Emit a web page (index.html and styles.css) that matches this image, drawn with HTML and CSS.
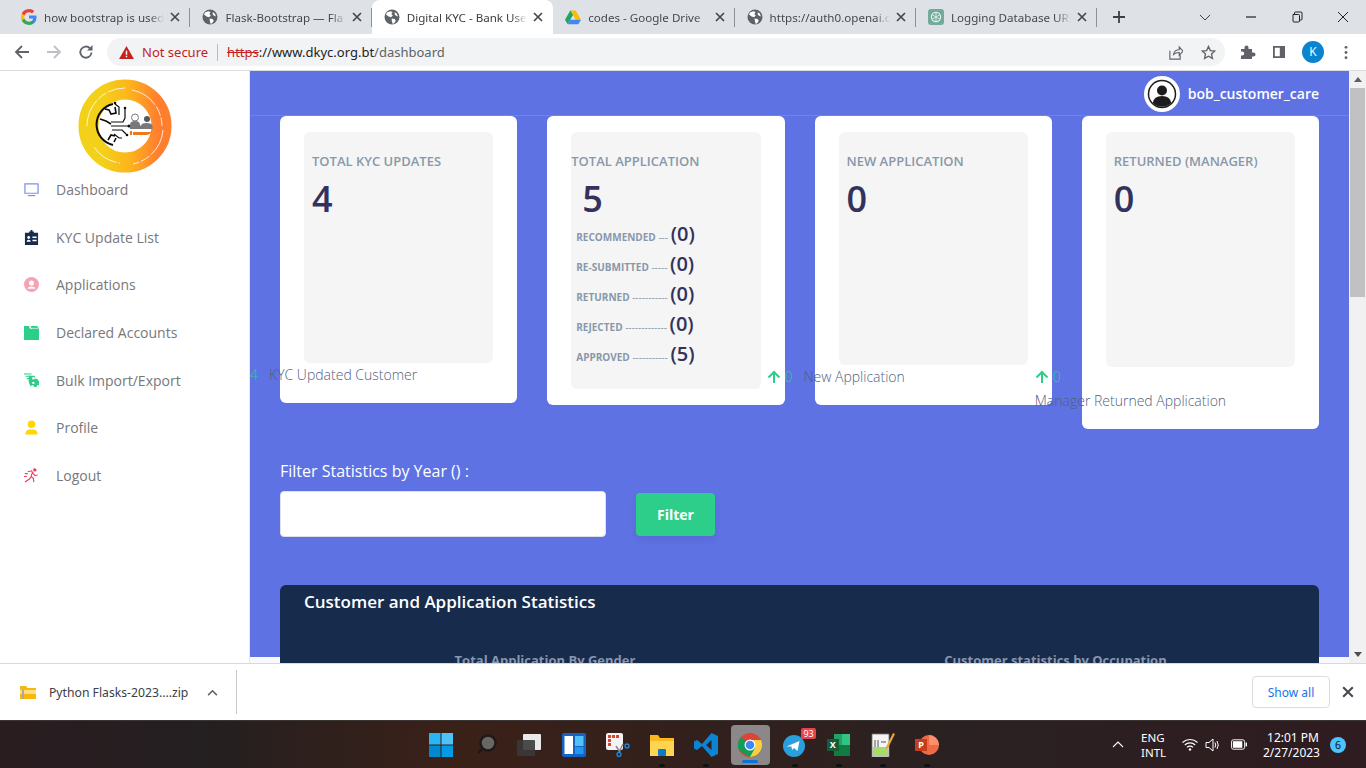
FILE: index.html
```html
<!DOCTYPE html>
<html>
<head>
  <meta charset="UTF-8">
  <title>Digital KYC - Bank User</title>
  <link rel="stylesheet" href="styles.css">
</head>
<body>
  <svg class="defs" width="0" height="0">
    <symbol id="globe" viewBox="0 0 16 16">
      <circle cx="8" cy="8" r="7.5" fill="#5f6368"/>
      <path d="M3 3.6 6.2 2.2 8.6 3 7.4 5 8.8 6.4 7 8.2 4.6 7.4 2 5.6ZM7.6 9.4l3 .6 1.2 1.8-1.8 2.6-1.4.4-.8-3ZM10.6 3.2l2.2 1.2 1.2 3-2-.6-1.2-1.4Z" fill="#fff"/>
    </symbol>
    <symbol id="x-mark" viewBox="0 0 10 10">
      <path d="M1 1 9 9M9 1 1 9" stroke="#45494e" stroke-width="1.7" fill="none"/>
    </symbol>
  </svg>

  <div class="tabstrip">
    <div class="tab tab-sep">
      <svg class="favicon" viewBox="0 0 16 16">
        <path d="M15.5 8.2c0-.6-.1-1.1-.2-1.6H8v3h4.2a3.6 3.6 0 0 1-1.6 2.4v2h2.6c1.5-1.4 2.3-3.4 2.3-5.8Z" fill="#4285f4"/>
        <path d="M8 16c2.2 0 4-.7 5.2-2l-2.6-2c-.7.5-1.6.8-2.6.8-2.1 0-3.900-1.4-4.5-3.3H.8v2.100A8 8 0 0 0 8 16Z" fill="#34a853"/>
        <path d="M3.5 9.500a4.800 4.800 0 0 1 0-3V4.400H.8a8 8 0 0 0 0 7.200Z" fill="#fbbc05"/>
        <path d="M8 3.200c1.200 0 2.200.4 3 1.200l2.300-2.300A8 8 0 0 0 .8 4.400l2.700 2.100C4.100 4.600 5.900 3.200 8 3.200Z" fill="#ea4335"/>
      </svg>
      <span class="tab-title">how bootstrap is used</span>
      <svg class="tab-close"><use href="#x-mark"/></svg>
    </div>
    <div class="tab tab-sep">
      <svg class="favicon"><use href="#globe"/></svg>
      <span class="tab-title">Flask-Bootstrap — Fla</span>
      <svg class="tab-close"><use href="#x-mark"/></svg>
    </div>
    <div class="tab tab-active">
      <svg class="favicon"><use href="#globe"/></svg>
      <span class="tab-title">Digital KYC - Bank Use</span>
      <svg class="tab-close"><use href="#x-mark"/></svg>
    </div>
    <div class="tab tab-sep">
      <svg class="favicon" viewBox="0 0 16 16">
        <path d="M5.3 1.500h5.400L16 10.700h-5.300Z" fill="#fbbc04"/>
        <path d="M5.3 1.500 0 10.700l2.700 4.600L8 6.100Z" fill="#1fa463"/>
        <path d="M2.7 15.300h10.600l2.700-4.600H5.300Z" fill="#4285f4"/>
      </svg>
      <span class="tab-title">codes - Google Drive</span>
      <svg class="tab-close"><use href="#x-mark"/></svg>
    </div>
    <div class="tab tab-sep">
      <svg class="favicon"><use href="#globe"/></svg>
      <span class="tab-title">https://auth0.openai.c</span>
      <svg class="tab-close"><use href="#x-mark"/></svg>
    </div>
    <div class="tab tab-sep">
      <svg class="favicon" viewBox="0 0 16 16">
        <rect width="16" height="16" rx="3" fill="#74aa9c"/>
        <circle cx="8" cy="8" r="4.600" fill="none" stroke="#e8f3f0" stroke-width="1.100"/>
        <path d="M8 3.400v9.200M4 5.700l8 4.600M12 5.700l-8 4.600" stroke="#e8f3f0" stroke-width=".8"/>
      </svg>
      <span class="tab-title">Logging Database URI</span>
      <svg class="tab-close"><use href="#x-mark"/></svg>
    </div>
    <svg class="new-tab" viewBox="0 0 12 12"><path d="M6 0v12M0 6h12" stroke="#3c4043" stroke-width="1.8"/></svg>
    <div class="win-controls">
      <svg viewBox="0 0 12 12"><path d="M1 4l5 5 5-5" fill="none" stroke="#3c4043"/></svg>
      <svg viewBox="0 0 12 12"><path d="M1 6h10" stroke="#222" stroke-width="1.2"/></svg>
      <svg viewBox="0 0 12 12"><path d="M3.5 3.500V2a1 1 0 0 1 1-1h5.500a1 1 0 0 1 1 1v6a1 1 0 0 1-1 1H8.500M2 3.500h5.500a1 1 0 0 1 1 1V10a1 1 0 0 1-1 1H3a1 1 0 0 1-1-1Z" fill="none" stroke="#222"/></svg>
      <svg viewBox="0 0 12 12"><path d="M1 1l10 10M11 1 1 11" stroke="#222"/></svg>
    </div>
  </div>

  <div class="toolbar">
    <svg class="tool-icon" viewBox="0 0 16 16"><path d="M15 8H2M8 2 2 8l6 6" fill="none" stroke="#5f6368" stroke-width="1.8"/></svg>
    <svg class="tool-icon" viewBox="0 0 16 16"><path d="M1 8h13M8 2l6 6-6 6" fill="none" stroke="#bdc1c6" stroke-width="1.8"/></svg>
    <svg class="tool-icon" viewBox="0 0 16 16"><path d="M13.5 8.500A5.600 5.600 0 1 1 12 4.300" fill="none" stroke="#5f6368" stroke-width="1.8"/><path d="M14.5 1v5.500H9Z" fill="#5f6368"/></svg>
    <div class="omnibox">
      <svg class="warn" viewBox="0 0 16 14"><path d="M8 0l8 14H0Z" fill="#c5221f"/><path d="M7.2 5h1.600v4.500H7.200ZM7.200 10.500h1.600V12H7.200Z" fill="#fff"/></svg>
      <span class="not-secure">Not secure</span>
      <span class="url"><s>https</s><span class="url-dark">://www.dkyc.org.bt</span>/dashboard</span>
      <svg class="omni-icon share" viewBox="0 0 16 16"><path d="M2 6v9h11v-4M6 10c.5-3.500 3-5 6-5V2l4 4.500L12 11V8c-2.500 0-4.500.5-6 2Z" fill="none" stroke="#5f6368" stroke-width="1.2"/></svg>
      <svg class="omni-icon" viewBox="0 0 16 16"><path d="M8 1.500l2 4.400 4.700.5-3.500 3.200 1 4.700L8 11.900l-4.200 2.400 1-4.700L1.300 6.400 6 5.900Z" fill="none" stroke="#5f6368" stroke-width="1.4"/></svg>
    </div>
    <svg class="tool-icon tool-ext" viewBox="0 0 16 16"><path d="M1 5h3.500V3.500a2 2 0 0 1 4 0V5H12v3.500h1.500a2 2 0 0 1 0 4H12V15H1v-3.500h1.200a2 2 0 0 0 0-4H1Z" fill="#5f6368"/></svg>
    <svg class="tool-icon" viewBox="0 0 16 16"><path d="M2 2h12v12H2ZM3.800 3.800v8.400h5V3.800Z" fill="#5f6368" fill-rule="evenodd"/></svg>
    <div class="account">K</div>
    <svg class="tool-menu" viewBox="0 0 4 16"><circle cx="2" cy="2.500" r="1.500" fill="#5f6368"/><circle cx="2" cy="8" r="1.500" fill="#5f6368"/><circle cx="2" cy="13.500" r="1.500" fill="#5f6368"/></svg>
  </div>

  <div class="page">
    <aside class="sidebar">
      <svg class="logo" viewBox="0 0 94 94">
        <defs>
          <linearGradient id="ring" x1="0" x2="1" y1="0" y2="0">
            <stop offset=".2" stop-color="#f3d019"/>
            <stop offset=".55" stop-color="#fdb51c"/>
            <stop offset=".95" stop-color="#ff7f2e"/>
          </linearGradient>
        </defs>
        <circle cx="47" cy="47" r="36.500" fill="none" stroke="url(#ring)" stroke-width="20"/>
        <path d="M9 47A38 38 0 0 1 47 9M54 11a37 37 0 0 1 30 36M85 51a38 38 0 0 1-30 34M16 68a37 37 0 0 0 26 16" fill="none" stroke="#fff" stroke-width=".8" stroke-dasharray="28 2 10 2"/>
        <path d="M35 25A21 21 0 0 0 35 66" fill="none" stroke="#0c0c0e" stroke-width="2"/>
        <path d="M27 30l4 1 2 4 5-1-1-6M22 40l6 2 5 3M30 61l3-5 4 1M36 63l2-4" fill="none" stroke="#0c0c0e" stroke-width="1.6"/>
        <path d="M33 43h12l2-4v-9M33 47h17M34 51h10l4 4M37 25l4 3v8M36 55l5 4h3" fill="none" stroke="#0c0c0e" stroke-width="1.2"/>
        <circle cx="47" cy="29" r="1.300" fill="#0c0c0e"/><circle cx="51" cy="47" r="1.500" fill="#0c0c0e"/><circle cx="49" cy="56" r="1.300" fill="#0c0c0e"/><circle cx="37" cy="24" r="1.300" fill="#0c0c0e"/>
        <circle cx="57" cy="38.500" r="3.500" fill="#fff" stroke="#77797c"/>
        <circle cx="69" cy="40" r="3" fill="#56585b"/>
        <path d="M52 50v-4q0-4 5-4t5 4l1 1q0-3 5.500-3t6 3v3Z" fill="#77797c"/>
        <path d="M52 52h2v4h-2ZM55 53h16q2 0 3-1-2 4-6 4H55Z" fill="#ee7a1d"/>
      </svg>
      <nav class="nav">
        <a class="nav-item">
          <svg viewBox="0 0 16 16"><path d="M1 2h14v10H1Z" fill="none" stroke="#7f8fef" stroke-width="1.3"/><path d="M4 14.500h8" stroke="#7f8fef" stroke-width="1.3"/></svg>
          Dashboard
        </a>
        <a class="nav-item">
          <svg viewBox="0 0 16 16"><path d="M1 3h4.500V1.500h1.500V0h2v1.500h1.500V3H15v13H1Z" fill="#172b4d"/><circle cx="5" cy="8" r="1.500" fill="#fff"/><path d="M2.800 12.500q0-2 2.200-2t2.200 2ZM9 7h4.500v1.500H9ZM9 10.500h4.500V12H9Z" fill="#fff"/></svg>
          KYC Update List
        </a>
        <a class="nav-item">
          <svg viewBox="0 0 16 16"><circle cx="8" cy="8" r="8" fill="#f5a3b4"/><circle cx="8" cy="6.300" r="2.700" fill="#fff"/><path d="M3.800 12.500q.5-2.500 4.200-2.500t4.200 2.500Z" fill="#fff"/></svg>
          Applications
        </a>
        <a class="nav-item">
          <svg viewBox="0 0 16 16"><path d="M0 1h5.500l.8 3H16v12H0Z" fill="#2dce89"/><path d="M7 1h7l2 3H8Z" fill="#2dce89"/><path d="M6 1.200l1 2.300h8.500" fill="none" stroke="#fff" stroke-width=".6"/></svg>
          Declared Accounts
        </a>
        <a class="nav-item">
          <svg viewBox="0 0 16 16"><path d="M0 1h8M1.500 3.500h6M3 6h5" stroke="#2dce89" stroke-width="1.2"/><path d="M5 3h6.500v3H14l2 3v4h-2a2 2 0 0 1-4 0H8.500a2 2 0 0 1-1.500 1Q5.500 12 5 9Z" fill="#2dce89"/><circle cx="10" cy="5.500" r="1.300" fill="#fff"/><circle cx="10" cy="10.500" r="1.300" fill="#fff"/></svg>
          Bulk Import/Export
        </a>
        <a class="nav-item">
          <svg viewBox="0 0 16 16"><circle cx="8" cy="4.500" r="4" fill="#ffd600"/><path d="M1.500 15.500q0-5 4-5.500h5q4 .5 4 5.500Z" fill="#ffd600"/></svg>
          Profile
        </a>
        <a class="nav-item">
          <svg viewBox="0 0 16 16"><circle cx="11.500" cy="2" r="1.800" fill="#f5365c"/><path d="M4 4l4-1 2 3 1.500 2 3-.5M9 4.500 7.500 9l2.500 2 .5 4M7.500 9.500 5.500 12 1 15M1 6h3M0 9h3" fill="none" stroke="#f5365c" stroke-width="1.2"/></svg>
          Logout
        </a>
      </nav>
    </aside>

    <main class="main">
      <header class="topbar">
        <div class="avatar">
          <svg viewBox="0 0 30 30"><circle cx="15" cy="15" r="13.500" fill="#fff" stroke="#1c1c1c" stroke-width="1.5"/><circle cx="15" cy="11.500" r="5" fill="#1c1c1c"/><path d="M5.800 24q1-7 9.200-7t9.200 7a13 13 0 0 1-18.400 0Z" fill="#1c1c1c"/></svg>
        </div>
        <span class="username">bob_customer_care</span>
      </header>

      <section class="cards">
        <div class="card">
          <div class="stat stat-one">
            <h5 class="stat-title">Total KYC Updates</h5>
            <div class="stat-num">4</div>
          </div>
          <p class="card-foot foot-one"><span class="foot-val foot-val-bare">4</span><span class="foot-label">KYC Updated Customer</span></p>
        </div>

        <div class="card">
          <div class="stat stat-two">
            <h5 class="stat-title">Total Application</h5>
            <div class="stat-num stat-num-in">5</div>
            <ul class="breakdown">
              <li><b>Recommended</b> --- <em>(0)</em></li>
              <li><b>Re-submitted</b> ----- <em>(0)</em></li>
              <li><b>Returned</b> ----------- <em>(0)</em></li>
              <li><b>Rejected</b> ------------- <em>(0)</em></li>
              <li><b>Approved</b> ----------- <em>(5)</em></li>
            </ul>
          </div>
        </div>

        <div class="card">
          <div class="stat stat-three">
            <h5 class="stat-title">New Application</h5>
            <div class="stat-num">0</div>
          </div>
          <p class="card-foot foot-three">
            <svg class="arrow" viewBox="0 0 14 14"><path d="M7 13V2M1.500 7.500 7 2l5.500 5.500" fill="none" stroke="#2dce89" stroke-width="2"/></svg><span class="foot-val">0</span><span class="foot-label">New Application</span>
          </p>
        </div>

        <div class="card">
          <div class="stat stat-four">
            <h5 class="stat-title">Returned (Manager)</h5>
            <div class="stat-num">0</div>
          </div>
          <p class="card-foot foot-four">
            <svg class="arrow" viewBox="0 0 14 14"><path d="M7 13V2M1.500 7.500 7 2l5.500 5.500" fill="none" stroke="#2dce89" stroke-width="2"/></svg><span class="foot-val">0</span><br>Manager Returned Application
          </p>
        </div>
      </section>

      <form class="filter">
        <label class="filter-label">Filter Statistics by Year () :</label>
        <div class="filter-row">
          <input class="filter-input" type="text">
          <button class="filter-btn" type="button">Filter</button>
        </div>
      </form>

      <section class="panel">
        <h3 class="panel-title">Customer and Application Statistics</h3>
        <div class="panel-cols">
          <h6>Total Application By Gender</h6>
          <h6>Customer statistics by Occupation</h6>
        </div>
      </section>
    </main>

    <div class="scrollbar">
      <svg class="scroll-arrow" viewBox="0 0 8 5"><path d="M4 0l4 5H0Z" fill="#606060"/></svg>
      <div class="scroll-thumb"></div>
      <svg class="scroll-arrow scroll-arrow-down" viewBox="0 0 8 5"><path d="M0 0h8L4 5Z" fill="#505050"/></svg>
    </div>
  </div>

  <div class="downloads">
    <div class="dl-item">
      <svg class="dl-icon" viewBox="0 0 16 14"><path d="M0 1h6l1.500 2H16v11H0Z" fill="#f7b70f"/><path d="M0 5h16v4H0Z" fill="#ffdf7d"/><path d="M2 5h2v9H2Z" fill="#a9a9a9"/></svg>
      <span class="dl-name">Python Flasks-2023....zip</span>
      <svg class="dl-caret" viewBox="0 0 12 8"><path d="M1 7l5-5 5 5" fill="none" stroke="#5f6368" stroke-width="1.8"/></svg>
    </div>
    <button class="show-all" type="button">Show all</button>
    <svg class="dl-close" viewBox="0 0 10 10"><use href="#x-mark"/></svg>
  </div>

  <div class="taskbar">
    <div class="task-icons">
      <span class="task-cell">
        <svg viewBox="0 0 24 24"><path d="M0 0h11.500v11.500H0Z" fill="#29b6f6"/><path d="M12.500 0H24v11.500H12.500Z" fill="#4fc3f7"/><path d="M0 12.500h11.500V24H0Z" fill="#0288d1"/><path d="M12.500 12.500H24V24H12.500Z" fill="#039be5"/></svg>
      </span>
      <span class="task-cell">
        <svg viewBox="0 0 24 24"><circle cx="15" cy="10" r="7.500" fill="#6a6664" stroke="#1d1a19" stroke-width="2.500"/><path d="M9 16l-4 4" stroke="#1d1a19" stroke-width="2.500"/></svg>
      </span>
      <span class="task-cell">
        <svg viewBox="0 0 24 24"><rect x="6" y="1" width="18" height="16" rx="1" fill="#e9e9e9"/><rect y="7" width="18" height="16" rx="1" fill="#3a3a3a" fill-opacity=".9"/></svg>
      </span>
      <span class="task-cell">
        <svg viewBox="0 0 24 24"><rect width="24" height="24" rx="2" fill="#1565c0"/><rect x="2.500" y="3" width="8.500" height="18" fill="#fff"/><rect x="13" y="3" width="8.500" height="10" fill="#4fc3f7"/><rect x="13" y="14" width="8.500" height="7" fill="#2196f3"/></svg>
      </span>
      <span class="task-cell">
        <svg viewBox="0 0 24 24"><rect x="0" y="0" width="17" height="17" rx="2" fill="#f3f3f3"/><path d="M2 2h3v3H2ZM6 2h3v3H6ZM10 2h3v3h-3ZM2 6h3v3H2ZM2 10h3v3H2Z" fill="#d9452e"/><path d="M10 13l4 6M17 11l-4 8" stroke="#8a8a8a" stroke-width="1.5"/><circle cx="13" cy="21.500" r="2" fill="none" stroke="#1e88e5" stroke-width="1.3"/><circle cx="21" cy="13" r="2" fill="none" stroke="#1e88e5" stroke-width="1.3"/></svg>
      </span>
      <span class="task-cell dot">
        <svg viewBox="0 0 24 24"><path d="M0 2h8l2 3h14v18H0Z" fill="#f9b921"/><path d="M0 8h24v15H0Z" fill="#ffd54f"/><rect x="8" y="16" width="8" height="7" rx="1" fill="#0f79c9"/></svg>
      </span>
      <span class="task-cell dot">
        <svg viewBox="0 0 24 24"><path d="M17.500 0 24 3v18l-6.500 3L8 13l-5 4-3-1.500v-7L3 7l5 4Zm0 7L12 12l5.500 5Z" fill="#0b84d6" fill-rule="evenodd"/></svg>
      </span>
      <span class="task-cell task-active">
        <svg viewBox="0 0 24 24"><circle cx="12" cy="12" r="12" fill="#db4437"/><path d="M12 12 1.600 18A12 12 0 0 1 3 4.200Z" fill="#0f9d58"/><path d="M12 12h12a12 12 0 0 1-12 12L1.600 18Z" fill="#0f9d58"/><path d="M12 7h11a12 12 0 0 1-11 17l5-9Z" fill="#ffcd40"/><circle cx="12" cy="12" r="5.500" fill="#fff"/><circle cx="12" cy="12" r="4.300" fill="#4285f4"/></svg>
      </span>
      <span class="task-cell dot">
        <svg viewBox="0 0 24 24"><circle cx="11" cy="13" r="11" fill="#2a9fdc"/><path d="M3.500 13.500l13-5.500-2 10-3.500-3-2 2-.5-3.500Z" fill="#fff"/></svg>
        <span class="badge-count">93</span>
      </span>
      <span class="task-cell dot">
        <svg viewBox="0 0 24 24"><path d="M7 1h16v22H7Z" fill="#21a366"/><path d="M15 1h8v11h-8Z" fill="#33c481"/><path d="M7 12h16v11H7Z" fill="#107c41"/><rect y="6" width="12" height="12" fill="#185c37"/></svg>
        <span class="app-letter">X</span>
      </span>
      <span class="task-cell dot">
        <svg viewBox="0 0 24 24"><path d="M1 1h17v23H1Z" fill="#f4f4f4" stroke="#777" stroke-width=".8"/><path d="M2 14h15v9H2Z" fill="#a5dc6a"/><path d="M4 7v7M7 7v7M10 9h5" stroke="#555"/><path d="M22 0l2 1-7 14-2.500 1.500L15 14Z" fill="#e8a53c"/></svg>
      </span>
      <span class="task-cell dot">
        <svg viewBox="0 0 24 24"><circle cx="14" cy="12" r="10" fill="#ed6c47"/><path d="M14 2a10 10 0 0 1 10 10H14Z" fill="#ff8f6b"/><rect y="6" width="12" height="12" fill="#c43e1c"/></svg>
        <span class="app-letter">P</span>
      </span>
    </div>
    <div class="tray">
      <svg class="tray-caret" viewBox="0 0 12 7"><path d="M1 6l5-5 5 5" fill="none" stroke="#fff" stroke-width="1.1"/></svg>
      <div class="tray-lang">ENG<br>INTL</div>
      <svg class="tray-wifi" viewBox="0 0 16 13"><path d="M.5 4.500a11 11 0 0 1 15 0M2.800 7a7.500 7.500 0 0 1 10.400 0M5 9.400a4.200 4.200 0 0 1 6 0" fill="none" stroke="#fff" stroke-width="1.1"/><circle cx="8" cy="11.500" r="1.200" fill="#fff"/></svg>
      <svg class="tray-sound" viewBox="0 0 16 14"><path d="M1 4.500h3L8 1v12L4 9.500H1Z" fill="none" stroke="#fff"/><path d="M10 4.500q1.500 2.500 0 5M12 3q2.500 4 0 8" fill="none" stroke="#fff"/></svg>
      <svg class="tray-batt" viewBox="0 0 17 11"><rect x=".5" y=".5" width="14" height="10" rx="2" fill="none" stroke="#fff"/><rect x="2" y="2" width="10" height="7" fill="#fff"/><rect x="15.500" y="3.500" width="1.500" height="4" fill="#fff"/></svg>
      <div class="tray-clock">12:01 PM<br>2/27/2023</div>
      <div class="tray-notif">6</div>
    </div>
  </div>
</body>
</html>
```

FILE: styles.css
```css
* { box-sizing: border-box; }
html, body { margin: 0; height: 768px; overflow: hidden; }
body { font-family: "Open Sans", sans-serif; background: #fff; width: 1366px; }
.defs { position: absolute; }

/* browser chrome */
.tabstrip { display: flex; height: 34px; background: #dee1e6; padding-left: 9px; align-items: center; }
.tab {
  width: 181.4px;
  height: 34px;
  display: flex;
  align-items: center;
  padding: 0 10px 0 12px;
  font-family: "Noto Sans", sans-serif;
  font-size: 11.6px;
  color: #45494e;
  position: relative;
}
.tab-sep::after { content: ""; position: absolute; right: 0; top: 8px; height: 19px; width: 1px; background: #8e9196; }
.tab-active { background: #fff; border-radius: 8px 8px 0 0; color: #3c4043; }
.favicon { width: 16px; height: 16px; flex: none; margin-right: 7px; }
.tab-title {
  flex: 1;
  white-space: nowrap;
  overflow: hidden;
  -webkit-mask-image: linear-gradient(to right, #000 88%, transparent);
  mask-image: linear-gradient(to right, #000 88%, transparent);
}
.tab-close { width: 10px; height: 10px; flex: none; margin: 0 0 0 6px; }
.new-tab { width: 12px; height: 12px; margin-left: 16px; }
.win-controls { margin-left: auto; display: flex; width: 180px; padding-left: 13px; gap: 34px; }
.win-controls svg { width: 12px; height: 12px; flex: none; }

.toolbar { height: 37px; display: flex; align-items: center; padding-left: 14px; background: #fff; border-bottom: 1px solid #dadce0; }
.tool-icon { width: 16px; height: 16px; flex: none; margin-right: 16px; }
.omnibox {
  width: 1118px;
  height: 28px;
  margin: 0 15px 0 -3px;
  border-radius: 14px;
  background: #f1f3f4;
  display: flex;
  align-items: center;
  padding-left: 12px;
  font-family: "Noto Sans", sans-serif;
  font-size: 13px;
  flex: none;
}
.warn { width: 15px; height: 13px; margin-right: 8px; }
.not-secure { color: #c5221f; padding-right: 9px; border-right: 1px solid #b9bcbf; line-height: 17px; }
.url { margin-left: 9px; color: #5f6368; }
.url s { color: #c5221f; }
.url-dark { color: #202124; }
.omni-icon { width: 15px; height: 15px; margin-right: 9px; }
.share { margin-left: auto; margin-right: 18px; }
.tool-ext { margin-right: 15px; }
.account { width: 22px; height: 22px; border-radius: 50%; background: #0b84cf; color: #fff; font-size: 12px; text-align: center; line-height: 22px; margin-left: -1px; }
.tool-menu { width: 4px; height: 15px; margin-left: 20px; }

/* page */
.page { display: flex; height: 592px; overflow: hidden; }
.sidebar { width: 250px; flex: none; background: #fff; border-right: 1px solid #e8e8ec; padding-top: 8px; }
.logo { display: block; width: 94px; height: 94px; margin: 0 0 0 78px; }
.nav { margin-top: -7.3px; }
.nav-item { display: flex; align-items: center; height: 47.67px; padding-left: 24px; font-size: 14px; color: #77787b; }
.nav-item svg { width: 15px; height: 15px; margin-right: 17px; flex: none; }

.main { width: 1099px; flex: none; background: linear-gradient(#5e72e4 586px, #f8f9fe 586px); overflow: hidden; }
.topbar { height: 45px; display: flex; align-items: center; justify-content: flex-end; padding-right: 30px; border-bottom: 1px solid rgba(255,255,255,.12); }
.avatar { width: 36px; height: 36px; border-radius: 50%; background: #fff; padding: 3px; margin-right: 8px; margin-top: 1px; }
.avatar svg { display: block; width: 30px; height: 30px; }
.username { color: #fff; font-size: 14px; font-weight: 600; margin-top: 1px; }

.cards { display: grid; grid-template-columns: repeat(4, 1fr); gap: 30px; padding: 0 30px; align-items: start; }
.card { background: #fff; border-radius: 6px; padding: 16px 24px; }
.stat { background: #f5f5f5; border-radius: 6px; padding: 20px 8px 0; }
.stat-one { height: 231px; }
.stat-two { height: 257px; padding: 20px 0 0; }
.stat-three { height: 233px; }
.stat-four { height: 235px; }
.stat-title { margin: 0; font-size: 13px; line-height: 19px; font-weight: 600; color: #8898aa; text-transform: uppercase; }
.stat-num { font-size: 36px; line-height: 44px; font-weight: 600; color: #32325d; margin-top: 6px; }
.stat-num-in { margin-left: 11px; }
.breakdown { list-style: none; margin: -2px 0 0; padding: 0 0 0 5px; }
.breakdown li { height: 30px; line-height: 30px; font-size: 10px; color: #8898aa; white-space: nowrap; }
.breakdown b { font-weight: 700; text-transform: uppercase; }
.breakdown em { font-style: normal; font-size: 20px; font-weight: 600; color: #32325d; }

.card-foot { margin: 0; line-height: 24px; font-size: 14px; font-weight: 300; color: #525f7f; white-space: nowrap; }
.foot-one { margin-left: -54px; }
.foot-three { margin-left: -72px; }
.foot-four { margin-left: -71px; margin-top: -2px; }
.arrow { width: 14px; height: 14px; vertical-align: -2px; }
.foot-val { color: #2dce89; margin-left: 4px; }
.foot-val-bare { margin-left: 0; }
.foot-label { margin-left: 11px; }

.filter { padding: 30px 30px 0; }
.filter-label { display: block; color: #fff; font-size: 16px; line-height: 24px; font-weight: 400; }
.filter-row { display: flex; align-items: center; gap: 30px; margin-top: 8px; }
.filter-input { width: 326px; height: 46px; background: #fff; border: 1px solid #dee2e6; border-radius: 4px; }
.filter-btn {
  width: 79px;
  height: 43px;
  background: #2dce89;
  color: #fff;
  border: 0;
  border-radius: 4px;
  font-family: "Open Sans", sans-serif;
  font-size: 14px;
  font-weight: 700;
  box-shadow: 0 4px 6px rgba(50,50,93,.11);
}

.panel { margin: 48px 30px 0; background: #172b4d; border-radius: 6px 6px 0 0; height: 200px; padding: 6px 24px; }
.panel-title { margin: 0; color: #fff; font-size: 17px; line-height: 22px; font-weight: 600; }
.panel-cols { display: grid; grid-template-columns: 482px 1fr; margin-top: 37px; }
.panel-cols h6 { margin: 0; color: #8a97ab; font-size: 13px; line-height: 20px; font-weight: 700; text-align: center; }
.panel-cols h6:last-child { padding-left: 30px; }

.scrollbar { width: 17px; flex: none; background: #f1f1f1; position: relative; }
.scroll-arrow { position: absolute; top: 6px; left: 4.5px; width: 8px; height: 5px; }
.scroll-arrow-down { top: auto; bottom: 6px; }
.scroll-thumb { margin: 17px 0 0 1px; width: 15px; height: 209px; background: #c1c1c1; position: absolute; }

/* download bar */
.downloads { height: 57px; display: flex; align-items: center; background: #fff; border-top: 1px solid #d9d9dc; }
.dl-item { width: 237px; height: 44px; display: flex; align-items: center; padding-left: 20px; border-right: 1px solid #c8c9cc; font-family: "Noto Sans", sans-serif; font-size: 12.2px; color: #3c4043; }
.dl-icon { width: 16px; height: 14px; margin-right: 13px; flex: none; }
.dl-name { width: 144px; flex: none; white-space: nowrap; }
.dl-caret { width: 11px; height: 7px; margin-left: 14px; flex: none; }
.show-all {
  width: 78px;
  height: 32px;
  margin-left: auto;
  background: #fff;
  border: 1px solid #dadce0;
  border-radius: 4px;
  color: #1a73e8;
  font-family: "Noto Sans", sans-serif;
  font-size: 12px;
}
.dl-close { width: 12px; height: 12px; margin: 0 12px 0 12px; }

/* windows taskbar */
.taskbar {
  height: 48px;
  display: flex;
  align-items: center;
  background: linear-gradient(to right, #2a1d20 0%, #241f20 15%, #3a2118 33%, #33201c 50%, #2a2122 70%, #2f1c20 100%);
  border-top: 1px solid #3a3432;
  color: #fff;
  font-family: "Noto Sans", sans-serif;
}
.task-icons { display: flex; margin-left: 419px; }
.task-cell { width: 44.2px; height: 40px; display: flex; align-items: center; justify-content: center; position: relative; }
.task-cell svg { width: 24px; height: 24px; }
.dot::after { content: ""; position: absolute; left: 19px; bottom: -2px; width: 6px; height: 3px; border-radius: 2px; background: #111; }
.task-active::before { content: ""; position: absolute; left: 3px; right: 3px; top: 0; bottom: 0; border-radius: 4px; background: #8c8789; }
.task-active svg { position: relative; }
.task-active::after { content: ""; position: absolute; left: 14px; bottom: 2px; width: 16px; height: 3px; border-radius: 2px; background: #0a74d6; }
.badge-count { position: absolute; right: 1px; top: 3px; background: #e8424a; color: #fff; font-size: 9px; line-height: 11px; padding: 0 2px; border-radius: 2px; }
.app-letter { position: absolute; left: 10px; top: 12px; width: 12px; color: #fff; font-size: 9px; line-height: 16px; font-weight: 700; text-align: center; }
.tray { margin-left: auto; display: flex; align-items: center; font-size: 12px; line-height: 15px; padding-right: 20px; }
.tray-caret { width: 12px; height: 7px; margin-right: 17px; }
.tray-lang { width: 41px; font-size: 11.5px; }
.tray-wifi { width: 16px; height: 13px; margin-right: 7px; }
.tray-sound { width: 16px; height: 14px; margin-right: 10px; }
.tray-batt { width: 16px; height: 11px; margin-right: 16px; }
.tray-clock { text-align: right; white-space: nowrap; font-size: 12px; width: 56px; }
.tray-notif { width: 16px; height: 16px; margin-left: 11px; border-radius: 50%; background: #4cc2ff; color: #111; font-size: 10.5px; line-height: 16px; text-align: center; }
```
